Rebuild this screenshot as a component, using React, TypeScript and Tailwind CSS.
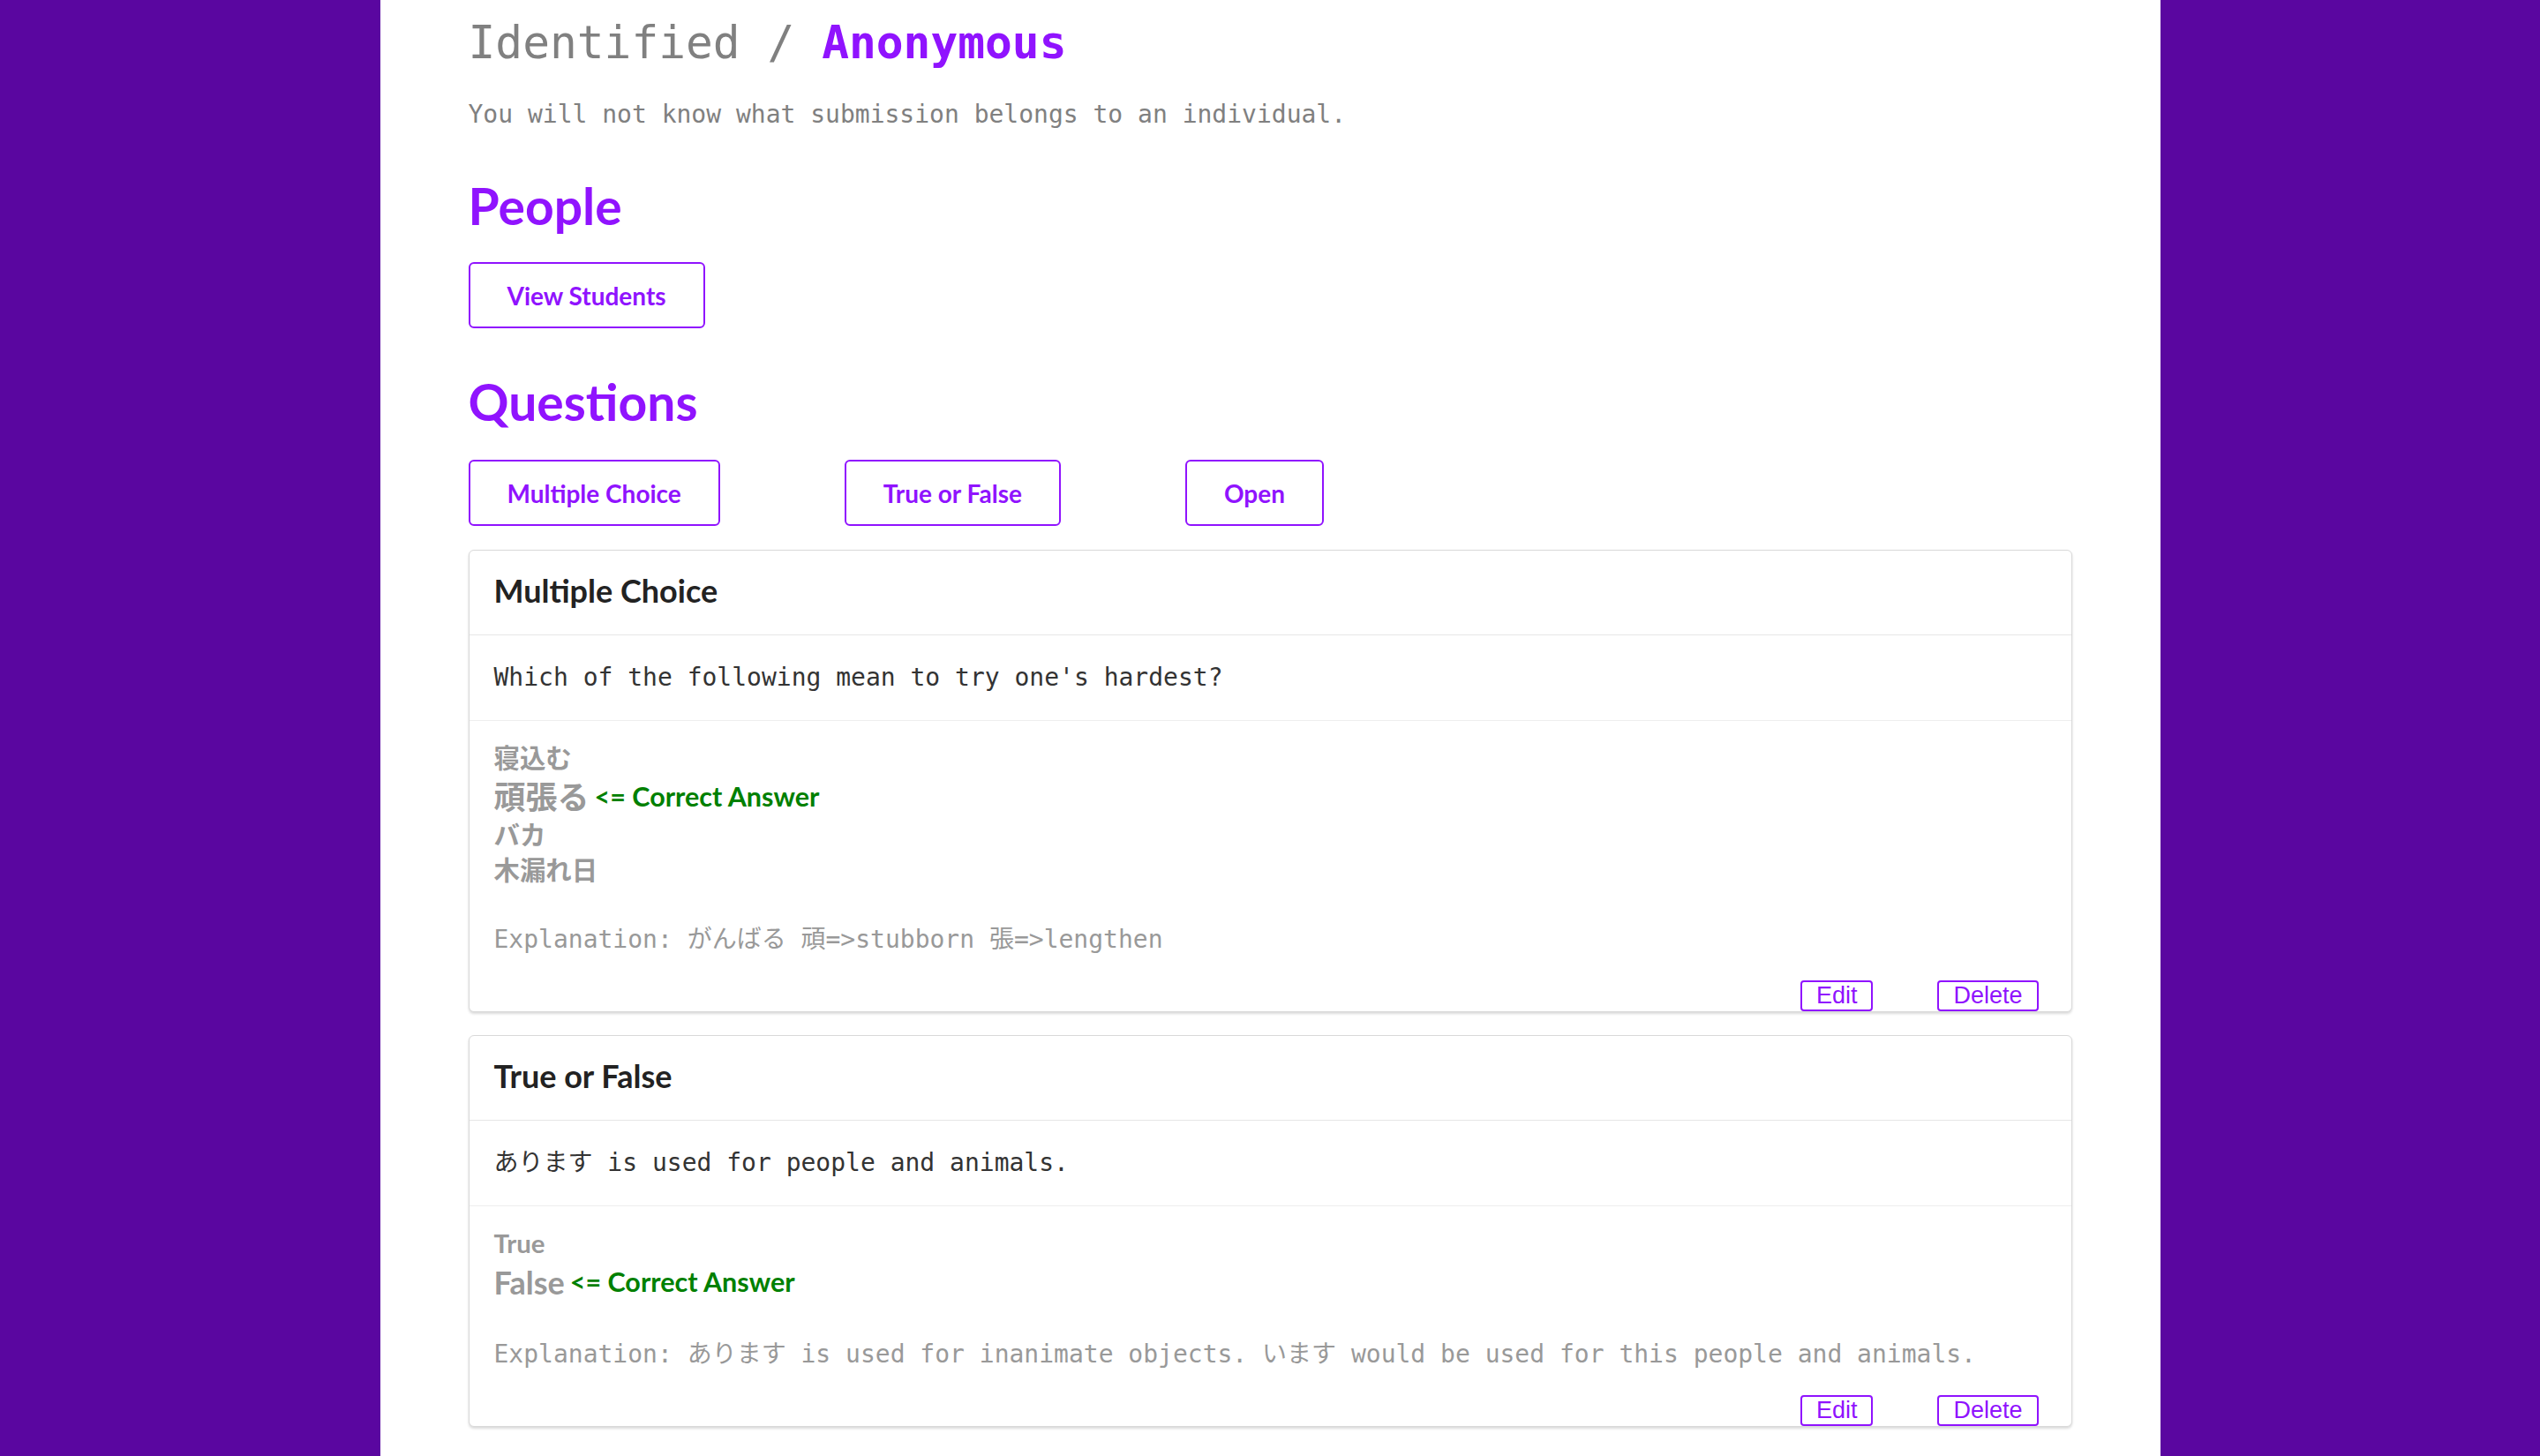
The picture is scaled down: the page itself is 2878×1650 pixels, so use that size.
import React from "react";

const PURPLE = "text-[#9013fe]";

type Answer = { text: string; correct?: boolean };

type Question = {
  id: string;
  kind: string;
  prompt: string;
  answers: Answer[];
  explanation: string;
};

const QUESTIONS: Question[] = [
  {
    id: "q1",
    kind: "Multiple Choice",
    prompt: "Which of the following mean to try one's hardest?",
    answers: [
      { text: "寝込む" },
      { text: "頑張る", correct: true },
      { text: "バカ" },
      { text: "木漏れ日" },
    ],
    explanation: "Explanation: がんばる 頑=>stubborn 張=>lengthen",
  },
  {
    id: "q2",
    kind: "True or False",
    prompt: "あります is used for people and animals.",
    answers: [{ text: "True" }, { text: "False", correct: true }],
    explanation:
      "Explanation: あります is used for inanimate objects. います would be used for this people and animals.",
  },
];

const mono = "font-['DejaVu_Sans_Mono','Noto_Sans_CJK_JP',monospace]";
const lato = "font-['Lato','Noto_Sans_CJK_JP',sans-serif]";

function OutlineButton({ children }: { children: React.ReactNode }) {
  return (
    <button
      type="button"
      className={`h-[75px] rounded-[6px] border-2 border-[#9013fe] bg-white px-[42px] text-[28px] font-bold ${PURPLE} ${lato}`}
    >
      {children}
    </button>
  );
}

function QuestionCard({ question }: { question: Question }) {
  return (
    <div className="rounded-[6px] border border-[#d9d9d9] bg-white shadow-[0_2px_3px_rgba(0,0,0,0.15)]">
      <div className="flex h-[96px] items-center border-b border-[#e6e6e6] px-[28px] pb-[5px]">
        <h3 className={`text-[36px] font-bold text-[#222] ${lato}`}>{question.kind}</h3>
      </div>
      <div className={`flex h-[97px] items-center border-b border-[#eeeeee] px-[28px] text-[28px] text-[#333] ${mono}`}>
        {question.prompt}
      </div>
      <div className="px-[28px] pt-[22px]">
        {question.answers.map((answer) =>
          answer.correct ? (
            <div key={answer.text} className={`flex h-[47px] items-center font-bold ${lato}`}>
              <span className="text-[36px] text-[#999]">{answer.text}</span>
              <span className="ml-[6px] text-[30.5px] text-[#008000]">&lt;= Correct Answer</span>
            </div>
          ) : (
            <div key={answer.text} className={`flex h-[40px] items-center text-[29.4px] font-bold text-[#999] ${lato}`}>
              {answer.text}
            </div>
          ),
        )}
        <p className={`mt-[39px] text-[28px] leading-[40px] text-[#999] ${mono}`}>
          {question.explanation}
        </p>
        <div className="mt-[26px] flex justify-end gap-[73px] pr-[9px]">
          <button
            type="button"
            className={`h-[35px] rounded-[4px] border-2 border-[#9013fe] bg-white px-[16px] text-[27px] leading-none ${PURPLE} font-['Liberation_Sans',Arial,sans-serif]`}
          >
            Edit
          </button>
          <button
            type="button"
            className={`h-[35px] rounded-[4px] border-2 border-[#9013fe] bg-white px-[16px] text-[27px] leading-none ${PURPLE} font-['Liberation_Sans',Arial,sans-serif]`}
          >
            Delete
          </button>
        </div>
      </div>
    </div>
  );
}

export default function App() {
  return (
    <div className="min-h-screen bg-[#5a06a0]">
      <main className="mx-auto min-h-screen w-[2017px] bg-white px-[100px] pb-[60px] pt-[23px]">
        <h1 className={`text-[51.2px] leading-[51px] text-[#808080] ${mono}`}>
          Identified / <span className={`font-bold ${PURPLE}`}>Anonymous</span>
        </h1>
        <p className={`mt-[39px] text-[28px] leading-[33px] text-[#808080] ${mono}`}>
          You will not know what submission belongs to an individual.
        </p>

        <h2 className={`mt-[58px] text-[57px] font-bold leading-[59px] ${PURPLE} ${lato}`}>People</h2>
        <div className="mt-[34px]">
          <OutlineButton>View Students</OutlineButton>
        </div>

        <h2 className={`mt-[54px] text-[57px] font-bold leading-[59px] ${PURPLE} ${lato}`}>Questions</h2>
        <div className="mt-[36px] flex gap-[141px]">
          <OutlineButton>Multiple Choice</OutlineButton>
          <OutlineButton>True or False</OutlineButton>
          <OutlineButton>Open</OutlineButton>
        </div>

        <div className="mt-[27px] flex flex-col gap-[26px]">
          {QUESTIONS.map((question) => (
            <QuestionCard key={question.id} question={question} />
          ))}
        </div>
      </main>
    </div>
  );
}
